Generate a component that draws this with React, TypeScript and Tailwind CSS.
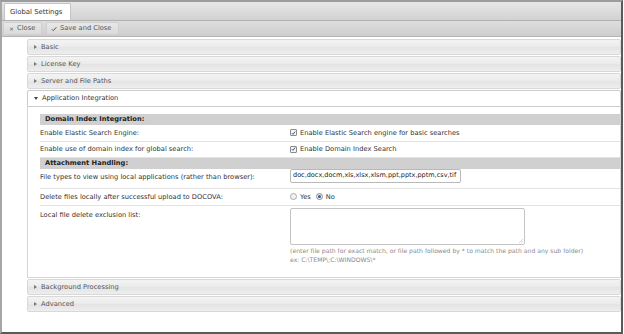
import React from "react";

const F = { fontFamily: '"DejaVu Sans", Verdana, sans-serif' } as React.CSSProperties;

function Collapsed({ label }: { label: string }) {
  return (
    <div className="flex items-center h-[16px] mb-[1px] border border-[#d8d8d8] bg-[linear-gradient(#f3f3f3,#ececec_45%,#e4e4e4_55%,#eeeeee)] rounded-[2px]">
      <span className="ml-[6px] w-0 h-0 border-y-[2px] border-y-transparent border-l-[3px] border-l-[#777]" />
      <span className="ml-[4px] text-[6.7px] text-[#555]">{label}</span>
    </div>
  );
}

function Check() {
  return (
    <span className="inline-flex items-center justify-center w-[7px] h-[7px] border border-[#8a8a8a] bg-[#f4f4f4] rounded-[1px]">
      <svg width="6" height="6" viewBox="0 0 6 6">
        <path d="M1 3.2 L2.4 4.6 L5 1.2" stroke="#2c4a8c" strokeWidth="1.1" fill="none" />
      </svg>
    </span>
  );
}

function Row({ label, children, h }: { label: string; children: React.ReactNode; h: string }) {
  return (
    <div className={`flex items-center ${h} border-b border-[#e3e3e3]`}>
      <div className="w-[250px] text-[6.7px] text-[#333]">{label}</div>
      <div className="flex-1">{children}</div>
    </div>
  );
}

export default function App() {
  return (
    <div style={F} className="w-[623px] h-[334px] bg-white border-t-2 border-l-2 border-r-2 border-b-2 border-t-[#9c9c9c] border-l-[#a6a6a6] border-r-[#5a5a5a] border-b-[#5a5a5a] flex flex-col">
      <div className="h-[19px] flex items-end pl-[2px] bg-[linear-gradient(#e6e6e6,#d2d2d2)] border-b border-[#b0b0b0]">
        <div className="h-[17px] w-[67px] bg-white border border-b-0 border-[#c4c4c4] rounded-t-[2px] flex items-center pl-[5px] text-[6.9px] text-[#333]">
          Global Settings
        </div>
      </div>
      <div className="h-[16px] flex items-center gap-[4px] pl-[1px] bg-[linear-gradient(#dedede,#cdcdcd)] border-b border-[#b4b4b4]">
        <div className="h-[13px] w-[39px] flex items-center pl-[5px] bg-[linear-gradient(#e8e8e8,#dadada)] border border-[#cfcfcf] rounded-[1px] text-[6.7px] text-[#555]">
          <span className="text-[6px] mr-[3px]">×</span>Close
        </div>
        <div className="h-[13px] w-[73px] flex items-center pl-[4px] bg-[linear-gradient(#e8e8e8,#dadada)] border border-[#cfcfcf] rounded-[1px] text-[6.7px] text-[#555]">
          <svg width="6" height="6" viewBox="0 0 6 6" className="mr-[3px]">
            <path d="M0.8 3.2 L2.3 4.7 L5.3 1.3" stroke="#555" strokeWidth="1" fill="none" />
          </svg>
          Save and Close
        </div>
      </div>
      <div className="flex-1 pl-[25px] pt-[2px]">
        <Collapsed label="Basic" />
        <Collapsed label="License Key" />
        <Collapsed label="Server and File Paths" />
        <div className="flex items-center h-[17px] border border-[#cccccc] bg-white rounded-t-[2px]">
          <span className="ml-[6px] w-0 h-0 border-x-[2px] border-x-transparent border-t-[3px] border-t-[#444]" />
          <span className="ml-[4px] text-[6.7px] text-[#333]">Application Integration</span>
        </div>
        <div className="border-x border-b border-[#d6d6d6] pl-[12px] pt-[7px] h-[171px] mb-[1px]">
          <div className="h-[11px] bg-[#d0d0d0] flex items-center pl-[5px] text-[6.7px] font-bold text-[#222]">Domain Index Integration:</div>
          <Row label="Enable Elastic Search Engine:" h="h-[17px]">
            <div className="flex items-center gap-[3px] text-[6.7px] text-[#333]"><Check />Enable Elastic Search engine for basic searches</div>
          </Row>
          <Row label="Enable use of domain index for global search:" h="h-[16px]">
            <div className="flex items-center gap-[3px] text-[6.7px] text-[#333]"><Check />Enable Domain Index Search</div>
          </Row>
          <div className="h-[11px] bg-[#d0d0d0] flex items-center pl-[5px] text-[6.7px] font-bold text-[#222]">Attachment Handling:</div>
          <div className="flex items-start h-[20px] border-b border-[#e3e3e3]">
            <div className="w-[250px] text-[6.7px] text-[#333] pt-[3px]">File types to view using local applications (rather than browser):</div>
            <div className="h-[14px] w-[171px] border border-[#b9b9b9] rounded-[2px] flex items-center pl-[2px] text-[6.5px] text-[#222] whitespace-nowrap overflow-hidden">
              doc,docx,docm,xls,xlsx,xlsm,ppt,pptx,pptm,csv,tif
            </div>
          </div>
          <Row label="Delete files locally after successful upload to DOCOVA:" h="h-[17px]">
            <div className="flex items-center text-[6.7px] text-[#333]">
              <span className="w-[7px] h-[7px] rounded-full border border-[#aaa] bg-[#f2f2f2] mr-[3px]" />
              <span className="mr-[5px]">Yes</span>
              <span className="w-[7px] h-[7px] rounded-full border border-[#8a8a8a] bg-[#eee] mr-[3px] flex items-center justify-center">
                <span className="w-[3px] h-[3px] rounded-full bg-[#2a5d9a]" />
              </span>
              <span>No</span>
            </div>
          </Row>
          <div className="flex items-start pt-[2px]">
            <div className="w-[250px] text-[6.7px] text-[#333] pt-[2px]">Local file delete exclusion list:</div>
            <div className="flex-1">
              <div className="relative h-[37px] w-[235px] border border-[#c4c4c4] rounded-[2px]">
                <svg width="4" height="4" viewBox="0 0 4 4" className="absolute right-[1px] bottom-[1px]">
                  <path d="M4 0 L0 4 M4 2 L2 4" stroke="#bbb" strokeWidth="0.6" />
                </svg>
              </div>
              <div className="mt-[1px] text-[6.1px] leading-[9px] text-[#8a8a8a] whitespace-nowrap">
                (enter file path for exact match, or file path followed by * to match the path and any sub folder)
                <br />
                ex: C:\TEMP\;C:\WINDOWS\*
              </div>
            </div>
          </div>
        </div>
        <Collapsed label="Background Processing" />
        <Collapsed label="Advanced" />
      </div>
    </div>
  );
}
